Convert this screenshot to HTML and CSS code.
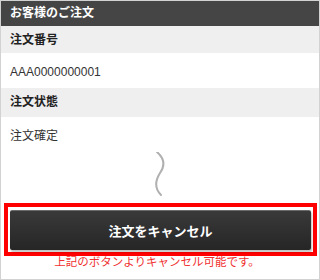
FILE: index.html
```html
<!DOCTYPE html>
<html lang="ja">
<head>
    <meta charset="UTF-8">
    <title>お客様のご注文</title>
    <meta name="viewport" content="width=device-width, initial-scale=1.0" />
    <link rel="stylesheet" href="styles.css">
</head>
<body>
    <div class="page">
        <div class="header">お客様のご注文</div>

        <div class="label">注文番号</div>
        <div class="value">AAA0000000001</div>

        <div class="label label-2">注文状態</div>
        <div class="value">注文確定</div>

        <div class="cut">
            <svg width="20" height="48" viewBox="0 0 20 48">
                <path d="M4 0 C 12 7, 12 14, 7 21 C 2 29, 2 37, 8 43" fill="none" stroke="#b0b0b0" stroke-width="2" stroke-linecap="round"/>
            </svg>
        </div>

        <div class="cancel-box">
            <button class="cancel-btn">注文をキャンセル</button>
        </div>
        <p class="note">上記のボタンよりキャンセル可能です。</p>
    </div>
</body>
</html>
```

FILE: styles.css
```css
body {
    margin: 0;
    font-family: 'Liberation Sans', 'Noto Sans CJK JP', sans-serif;
    background: #fff;
}

.page {
    width: 320px;
    height: 280px;
    box-sizing: border-box;
    border: 1px solid #d2d2d2;
    display: flex;
    flex-direction: column;
}

.header {
    height: 25px;
    background: #454545;
    color: #fff;
    font-size: 12px;
    font-weight: bold;
    line-height: 25px;
    padding-left: 9px;
}

.label {
    height: 27px;
    background: #efefef;
    color: #222;
    font-size: 12px;
    font-weight: bold;
    line-height: 28px;
    padding-left: 9px;
}

.label-2 {
    height: 29px;
    line-height: 29px;
}

.value {
    height: 35px;
    color: #333;
    font-size: 12px;
    line-height: 38px;
    padding-left: 9px;
}

.cut {
    height: 51px;
    display: flex;
    justify-content: center;
    padding-left: 6px;
}

.cancel-box {
    margin: 0 2px 0 3px;
    border: 4px solid #f00;
    padding: 3px 2px 2px 2px;
}

.cancel-btn {
    display: block;
    width: 100%;
    height: 40px;
    border: none;
    border-top: 1px solid #6a6a6a;
    border-radius: 2px;
    background: linear-gradient(#393939, #262626);
    box-shadow: 1px 2px 2px rgba(0, 0, 0, 0.25);
    color: #fff;
    font-family: 'Liberation Sans', 'Noto Sans CJK JP', sans-serif;
    font-size: 13px;
    font-weight: bold;
}

.note {
    margin: 0;
    text-align: center;
    color: #f03030;
    font-size: 11.5px;
    line-height: 13px;
    padding-right: 6px;
}
```
